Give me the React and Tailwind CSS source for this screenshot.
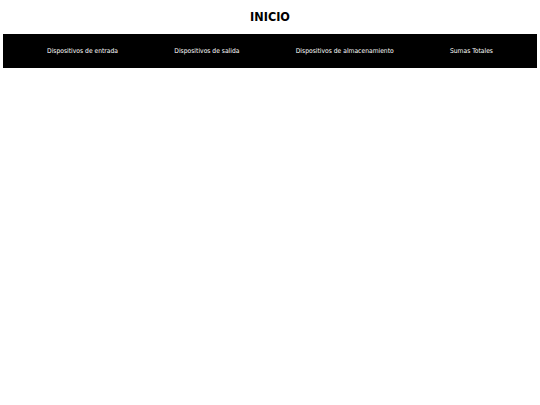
export default function App() {
  const items = ["Dispositivos de entrada", "Dispositivos de salida", "Dispositivos de almacenamiento", "Sumas Totales"];
  return (
    <div className="w-[540px] h-[405px] bg-white" style={{ fontFamily: '"DejaVu Sans Condensed", "DejaVu Sans", sans-serif' }}>
      <h1 className="h-[34px] flex items-center justify-center text-[12.5px] font-bold text-black pt-[1px]">INICIO</h1>
      <nav className="mx-[3px] h-[34px] bg-black flex items-center justify-between px-[44px] pt-[1px]">
        {items.map((t) => (
          <span key={t} className="text-white text-[6.7px]">{t}</span>
        ))}
      </nav>
    </div>
  );
}
